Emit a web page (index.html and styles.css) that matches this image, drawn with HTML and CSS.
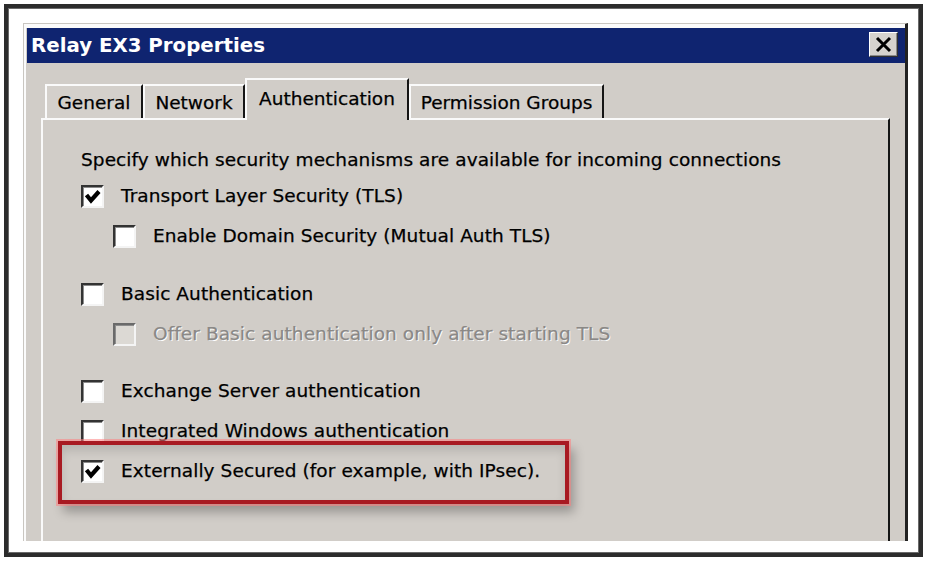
FILE: index.html
```html
<!DOCTYPE html>
<html>
<head>
<meta charset="utf-8">
<link rel="stylesheet" href="styles.css">
</head>
<body>
<div class="frame">
  <div class="dialog">
    <div class="titlebar">
      <span class="title">Relay EX3 Properties</span>
      <span class="close">
        <svg width="17" height="17" viewBox="0 0 17 17"><path d="M2 2 L15 15 M15 2 L2 15" stroke="#000" stroke-width="3" fill="none"/></svg>
      </span>
    </div>
    <div class="body">
      <div class="tabs">
        <div class="tab w-general">General</div>
        <div class="tab w-network">Network</div>
        <div class="tab selected w-auth">Authentication</div>
        <div class="tab w-perm">Permission Groups</div>
      </div>
      <div class="panel">
        <div class="intro">Specify which security mechanisms are available for incoming connections</div>
        <div class="row">
          <span class="cb checked"><svg width="19" height="19" viewBox="0 0 19 19"><polyline points="3.5,8 8,13.5 16,4.5" stroke="#000" stroke-width="4.2" fill="none"/></svg></span>
          <span class="label">Transport Layer Security (TLS)</span>
        </div>
        <div class="row sub">
          <span class="cb"></span>
          <span class="label">Enable Domain Security (Mutual Auth TLS)</span>
        </div>
        <div class="row group">
          <span class="cb"></span>
          <span class="label">Basic Authentication</span>
        </div>
        <div class="row sub">
          <span class="cb disabled"></span>
          <span class="label dis">Offer Basic authentication only after starting TLS</span>
        </div>
        <div class="row group2">
          <span class="cb"></span>
          <span class="label">Exchange Server authentication</span>
        </div>
        <div class="row">
          <span class="cb"></span>
          <span class="label">Integrated Windows authentication</span>
        </div>
        <div class="row">
          <span class="cb checked"><svg width="19" height="19" viewBox="0 0 19 19"><polyline points="3.5,8 8,13.5 16,4.5" stroke="#000" stroke-width="4.2" fill="none"/></svg></span>
          <span class="label">Externally Secured (for example, with IPsec).</span>
        </div>
        <div class="highlight"></div>
      </div>
    </div>
  </div>
</div>
</body>
</html>
```

FILE: styles.css
```css
html, body {
  margin: 0;
  background: #ffffff;
}
body {
  padding: 4px 0 0 4px;
  font-family: "DejaVu Sans", "Liberation Sans", sans-serif;
}
.frame {
  width: 919px;
  height: 553px;
  box-sizing: border-box;
  border: 4px solid #2c2c2c;
  box-shadow: inset 0 0 0 1px #6a6a6a;
  padding: 15px 11px 11px 15px;
  background: #fff;
}
.dialog {
  width: 885px;
  height: 518px;
  box-sizing: border-box;
  overflow: hidden;
  background: #d1cdc8;
  border-top: 1px solid #c9c6c1;
  border-left: 1px solid #c9c6c1;
  border-right: 3px solid #222;
  padding: 4px 0 0 3px;
  box-shadow: inset 2px 4px 0 #fbfbfb;
}
.titlebar {
  height: 35px;
  background: #0f2470;
  display: flex;
  justify-content: space-between;
  align-items: flex-start;
}
.title {
  color: #fff;
  font-weight: bold;
  font-size: 19.8px;
  line-height: 35px;
  padding-left: 4px;
}
.close {
  width: 29px;
  height: 25px;
  box-sizing: border-box;
  margin: 4px 7px 0 0;
  background: #d6d3ce;
  border-top: 1px solid #fff;
  border-left: 1px solid #fff;
  border-right: 1px solid #303030;
  border-bottom: 1px solid #303030;
  box-shadow: inset -1px -1px 0 #8a8a8a;
  display: flex;
  align-items: center;
  justify-content: center;
}
.body {
  padding: 15px 15px 0 14px;
}
.tabs {
  display: flex;
  align-items: flex-end;
  height: 40px;
  padding-left: 4px;
}
.tab {
  height: 34px;
  box-sizing: border-box;
  border-top: 2px solid #fafafa;
  border-left: 2px solid #fafafa;
  border-right: 2px solid #151515;
  background: #d4d0cb;
  font-size: 18.5px;
  color: #000;
  -webkit-text-stroke: 0.25px #000;
  display: flex;
  align-items: center;
  justify-content: center;
  padding-top: 1px;
}
.tab.selected {
  height: 42px;
  margin-bottom: -2px;
  position: relative;
  z-index: 2;
  background: #d1cdc8;
  padding-top: 0;
  padding-bottom: 4px;
}
.w-general { width: 98px; }
.w-network { width: 102px; }
.w-auth { width: 164px; }
.w-perm { width: 195px; }
.panel {
  position: relative;
  height: 440px;
  box-sizing: border-box;
  border-top: 2px solid #fafafa;
  border-left: 2px solid #fafafa;
  border-right: 2px solid #151515;
  padding: 28px 0 0 38px;
  font-size: 18.5px;
  letter-spacing: 0.08px;
  color: #000;
  -webkit-text-stroke: 0.25px #000;
}
.intro {
  line-height: 24px;
  margin-bottom: 4px;
}
.row {
  height: 40px;
  display: flex;
  align-items: center;
}
.row.sub {
  padding-left: 32px;
}
.row.group {
  margin-top: 18px;
}
.row.group2 {
  margin-top: 17px;
}
.cb {
  width: 23px;
  height: 23px;
  box-sizing: border-box;
  flex: none;
  background: #fff;
  border-top: 2px solid #333;
  border-left: 2px solid #333;
  border-right: 2px solid #f4f4f4;
  border-bottom: 2px solid #f4f4f4;
  box-shadow: inset 1px 1px 0 #8c8c8c;
  margin-right: 17px;
  display: flex;
}
.cb.disabled {
  background: #dcd9d4;
  border-top-color: #6a6a6a;
  border-left-color: #6a6a6a;
}
.label {
  white-space: nowrap;
  line-height: 24px;
}
.label.dis {
  color: #8a8886;
  -webkit-text-stroke: 0.25px #8a8886;
  text-shadow: 1px 1px 0 #fff;
}
.highlight {
  position: absolute;
  left: 15px;
  top: 321px;
  width: 511px;
  height: 63px;
  box-sizing: border-box;
  border: 4px solid #a81a22;
  box-shadow: 0 0 0 2px rgba(255, 130, 130, 0.55), 5px 8px 10px rgba(0, 0, 0, 0.28), inset 0 6px 10px rgba(0, 0, 0, 0.12);
  z-index: 3;
}
```
